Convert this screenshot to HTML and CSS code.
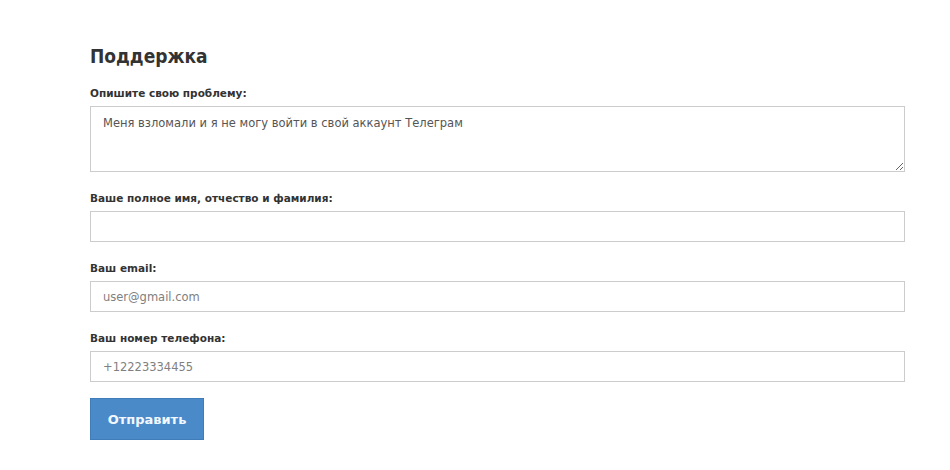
FILE: index.html
```html
<!DOCTYPE html>
<html>

<head>
    <meta charset="UTF-8">
    <link rel="stylesheet" href="styles.css">
    <title>Поддержка</title>
</head>

<body>
    <div class="support-form">
        <h1>Поддержка</h1>
        <div class="field">
            <label for="problem">Опишите свою проблему:</label>
            <textarea id="problem">Меня взломали и я не могу войти в свой аккаунт Телеграм</textarea>
        </div>
        <div class="field">
            <label for="fullname">Ваше полное имя, отчество и фамилия:</label>
            <input type="text" id="fullname">
        </div>
        <div class="field">
            <label for="email">Ваш email:</label>
            <input type="text" id="email" placeholder="user@gmail.com">
        </div>
        <div class="field">
            <label for="phone">Ваш номер телефона:</label>
            <input type="text" id="phone" placeholder="+12223334455">
        </div>
        <button class="send-button">Отправить</button>
    </div>
</body>

</html>
```

FILE: styles.css
```css
body {
    margin: 0;
    font-family: "DejaVu Sans", Verdana, sans-serif;
    font-size: 12px;
    color: #333;
    background-color: #fff;
}

.support-form {
    width: 815px;
    margin-left: 90px;
    padding-top: 42px;
}

h1 {
    margin: 0 0 15px 0;
    font-family: "DejaVu Sans Condensed", "DejaVu Sans", sans-serif;
    font-size: 19px;
    line-height: 28px;
    font-weight: bold;
    color: #333;
}

.field {
    margin-bottom: 18px;
}

label {
    display: block;
    font-weight: bold;
    font-size: 10.5px;
    line-height: 16px;
    margin-bottom: 5px;
    color: #333;
}

textarea,
input {
    display: block;
    box-sizing: border-box;
    width: 100%;
    border: 1px solid #ccc;
    background: #fff;
    font-family: "DejaVu Sans", Verdana, sans-serif;
    font-size: 11.5px;
    color: #555;
    padding: 6px 12px;
    margin: 0;
}

textarea {
    height: 66px;
    padding-top: 8px;
    line-height: 16px;
}

input {
    height: 31px;
}

input::placeholder {
    color: #808080;
}

.send-button {
    margin-top: -2px;
    width: 114px;
    height: 42px;
    border: 1px solid #3f7cb8;
    background-color: #4a8ac9;
    color: #f2f8ff;
    font-family: "DejaVu Sans", Verdana, sans-serif;
    font-size: 13px;
    font-weight: bold;
    cursor: pointer;
}
```
